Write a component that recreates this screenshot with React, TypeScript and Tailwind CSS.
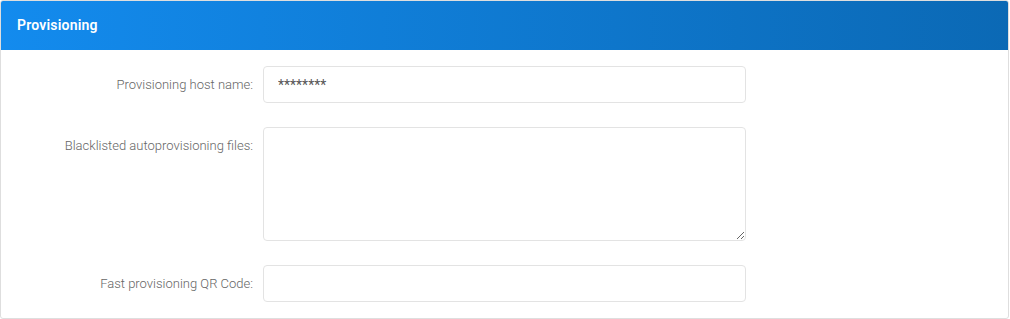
export default function App() {
  return (
    <div className="w-[1010px] bg-white" style={{ fontFamily: 'Roboto, "Liberation Sans", sans-serif' }}>
      <div className="w-[1009px] overflow-hidden rounded-[3px] border border-[#dedede]">
        {/* Header */}
        <div className="flex h-[49px] items-center bg-gradient-to-r from-[#138bee] to-[#0b69b5] px-4">
          <h2 className="text-[14px] font-semibold tracking-[0.2px] text-white">Provisioning</h2>
        </div>

        {/* Form */}
        <div className="flex flex-col gap-[24px] pt-[16px] pb-[16px]">
          <div className="flex items-start">
            <label className="w-[262px] shrink-0 pr-[10px] pt-[10px] text-right text-[13px] font-light leading-[18px] text-[#666]">
              Provisioning host name:
            </label>
            <input
              type="text"
              defaultValue="********"
              className="h-[37px] w-[483px] rounded-[4px] border border-[#e3e3e3] px-[14px] text-[14px] text-[#555] outline-none"
            />
          </div>

          <div className="flex items-start">
            <label className="w-[262px] shrink-0 pr-[10px] pt-[10px] text-right text-[13px] font-light leading-[18px] text-[#666]">
              Blacklisted autoprovisioning files:
            </label>
            <textarea className="h-[114px] w-[483px] rounded-[4px] border border-[#e3e3e3] px-[14px] py-2 text-[13px] text-[#555] outline-none" />
          </div>

          <div className="flex items-start">
            <label className="w-[262px] shrink-0 pr-[10px] pt-[10px] text-right text-[13px] font-light leading-[18px] text-[#666]">
              Fast provisioning QR Code:
            </label>
            <input
              type="text"
              className="h-[37px] w-[483px] rounded-[4px] border border-[#e3e3e3] px-[14px] text-[13px] text-[#555] outline-none"
            />
          </div>
        </div>
      </div>
    </div>
  );
}
